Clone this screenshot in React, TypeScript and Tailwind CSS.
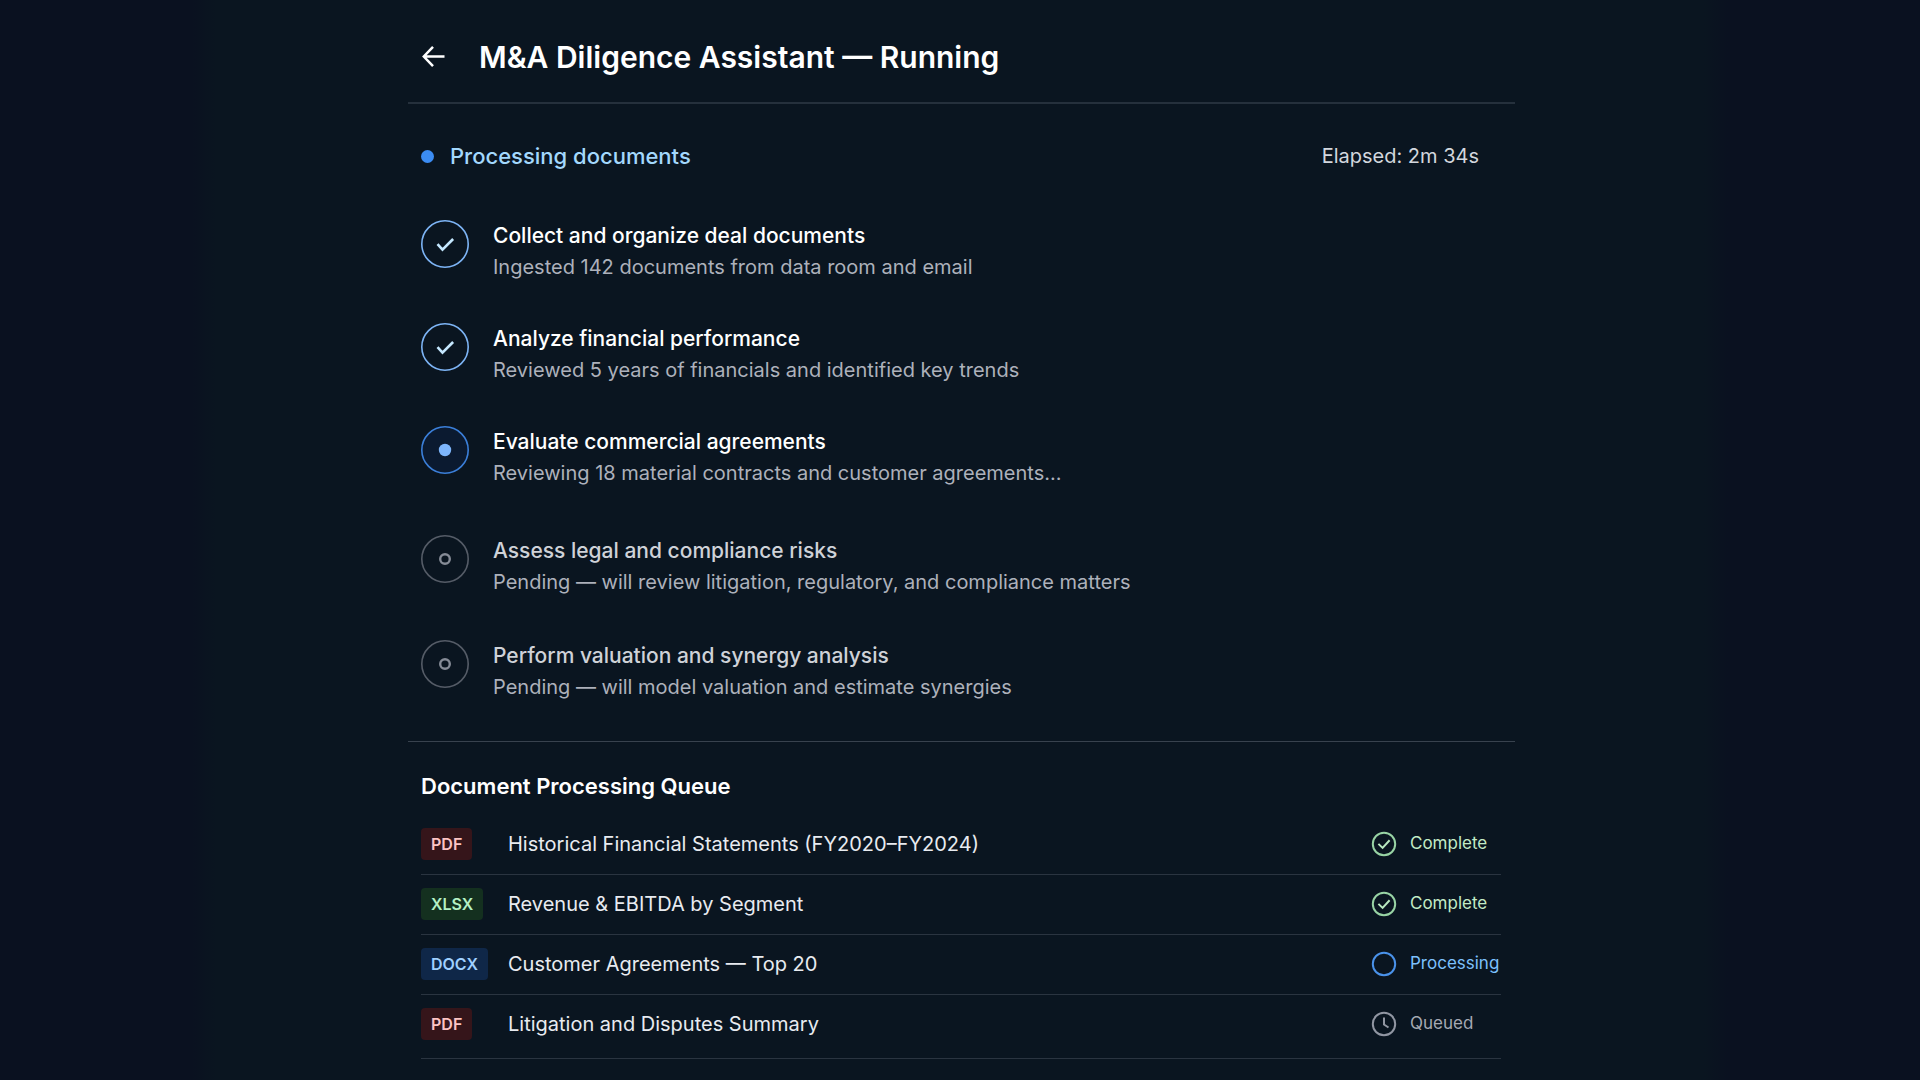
import { clsx } from "clsx";

type StepState = "done" | "active" | "pending";
type DocStatus = "Complete" | "Processing" | "Queued";

const steps: { title: string; detail: string; state: StepState }[] = [
  { title: "Collect and organize deal documents", detail: "Ingested 142 documents from data room and email", state: "done" },
  { title: "Analyze financial performance", detail: "Reviewed 5 years of financials and identified key trends", state: "done" },
  { title: "Evaluate commercial agreements", detail: "Reviewing 18 material contracts and customer agreements...", state: "active" },
  { title: "Assess legal and compliance risks", detail: "Pending — will review litigation, regulatory, and compliance matters", state: "pending" },
  { title: "Perform valuation and synergy analysis", detail: "Pending — will model valuation and estimate synergies", state: "pending" },
];

const documents: { type: string; name: string; status: DocStatus }[] = [
  { type: "PDF", name: "Historical Financial Statements (FY2020–FY2024)", status: "Complete" },
  { type: "XLSX", name: "Revenue & EBITDA by Segment", status: "Complete" },
  { type: "DOCX", name: "Customer Agreements — Top 20", status: "Processing" },
  { type: "PDF", name: "Litigation and Disputes Summary", status: "Queued" },
];

const badgeStyles: Record<string, string> = {
  PDF: "bg-[#35151a] text-[#fbc4c4]",
  XLSX: "bg-[#14301f] text-[#b5f0c4]",
  DOCX: "bg-[#0f2748] text-[#9fd0ff]",
};

const statusStyles: Record<DocStatus, string> = {
  Complete: "text-[#c3ebc6]",
  Processing: "text-[#7cc0fd]",
  Queued: "text-[#a5a9b3]",
};

function StepIcon({ state }: { state: StepState }) {
  return (
    <svg viewBox="0 0 48 48" fill="none" className="size-12 shrink-0">
      {state === "done" && (
        <>
          <circle cx="24" cy="24" r="23.2" stroke="#7db4f5" strokeWidth="1.6" />
          <path d="M16.5 24.2l5 5.5 10.6-10.7" stroke="#c5e8ff" strokeWidth="2.6" />
        </>
      )}
      {state === "active" && (
        <>
          <circle cx="24" cy="24" r="23.2" fill="#0b1a30" stroke="#3b7fd9" strokeWidth="1.6" />
          <circle cx="24" cy="24" r="6.2" fill="#7db5fb" />
        </>
      )}
      {state === "pending" && (
        <>
          <circle cx="24" cy="24" r="23.2" stroke="#555c67" strokeWidth="1.6" />
          <circle cx="24" cy="24" r="4.8" stroke="#858b96" strokeWidth="2.4" />
        </>
      )}
    </svg>
  );
}

function StatusIcon({ status }: { status: DocStatus }) {
  return (
    <svg viewBox="0 0 26 26" fill="none" strokeWidth="2" className="size-[26px] shrink-0">
      {status === "Complete" && (
        <>
          <circle cx="13" cy="13" r="11.2" stroke="#98d3a4" />
          <path d="M7.4 12.9l4.2 4 7-7.6" stroke="#b9e8c0" />
        </>
      )}
      {status === "Processing" && <circle cx="13" cy="13" r="11.2" stroke="#4a92ea" />}
      {status === "Queued" && (
        <>
          <circle cx="13" cy="13" r="11.2" stroke="#9196a2" />
          <path d="M13 6.5v7l4.5 3" stroke="#9196a2" />
        </>
      )}
    </svg>
  );
}

export default function App() {
  return (
    <div className="min-h-screen bg-[#0a1120] font-['Inter',sans-serif] text-white">
      <main className="mx-auto min-h-screen max-w-[1536px] bg-[linear-gradient(to_right,#0a1120,#0a1520_24px,#0a1520_calc(100%-24px),#0a1120)] pr-[213px] pl-[216px]">
        <header className="flex items-center border-b-2 border-[#25303c] px-[13px] pt-9 pb-6">
          <button type="button" aria-label="Back" className="mr-8 flex size-[26px] items-center">
            <svg viewBox="0 0 26 26" fill="none" stroke="currentColor" strokeWidth="2.5" className="size-[26px]">
              <path d="M23.5 12.5H3M12 2.8L2.8 12.5l9.2 9.7" />
            </svg>
          </button>
          <h1 className="text-[30px] leading-[42px] font-semibold">M&amp;A Diligence Assistant — Running</h1>
        </header>

        <section className="border-b border-[#38424e] pr-9 pb-[38px] pl-[13px]">
          <div className="flex items-center justify-between pt-9">
            <div className="flex items-center gap-4">
              <span className="size-[13px] rounded-full bg-[#3b8cf3]" />
              <h2 className="text-[22px] leading-8 font-medium text-[#a3d8fd]">Processing documents</h2>
            </div>
            <p className="text-xl leading-8 text-[#d3d7de]">Elapsed: 2m 34s</p>
          </div>

          <ol className="mt-12">
            {steps.map((step) => (
              <li
                key={step.title}
                className={clsx(
                  "flex gap-6 last:mb-0",
                  step.state === "done" && "mb-10",
                  step.state === "active" && "mb-[46px]",
                  step.state === "pending" && "mb-[42px]",
                )}
              >
                <StepIcon state={step.state} />
                <div>
                  <h3
                    className={clsx(
                      "text-[21px] leading-8 font-medium",
                      step.state === "pending" ? "text-[#cfd2d8]" : "text-white",
                    )}
                  >
                    {step.title}
                  </h3>
                  <p className="text-xl leading-[31px] text-[#adb1bb]">{step.detail}</p>
                </div>
              </li>
            ))}
          </ol>
        </section>

        <section className="pr-[14px] pl-[13px]">
          <h2 className="pt-7 pb-3 text-[22px] leading-8 font-semibold">Document Processing Queue</h2>
          <table className="w-full">
            <tbody>
              {documents.map((doc) => (
                <tr key={doc.name} className="h-[60px] border-b border-[#2a3440] last:h-16 [&:last-child>td]:pb-1">
                  <td className="w-[87px]">
                    <span
                      className={clsx(
                        "inline-flex h-8 items-center rounded px-[10px] text-base font-semibold",
                        badgeStyles[doc.type],
                      )}
                    >
                      {doc.type}
                    </span>
                  </td>
                  <td className="text-xl text-[#e8ebf0]">{doc.name}</td>
                  <td className="w-[130px]">
                    <div className={clsx("flex items-center gap-[13px] text-[17px]", statusStyles[doc.status])}>
                      <StatusIcon status={doc.status} />
                      {doc.status}
                    </div>
                  </td>
                </tr>
              ))}
            </tbody>
          </table>
        </section>
      </main>
    </div>
  );
}
